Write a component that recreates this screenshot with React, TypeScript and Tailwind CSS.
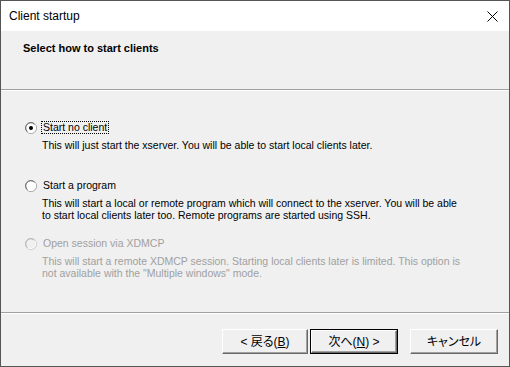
import React from 'react';

const ui = "font-['Liberation_Sans',Arial,sans-serif]";
const jp = "font-['Liberation_Sans','Noto_Sans_CJK_JP',sans-serif] [font-feature-settings:'palt']";

function Radio({ checked = false, disabled = false }: { checked?: boolean; disabled?: boolean }) {
  const fill = disabled ? '#f0f0f0' : '#ffffff';
  return (
    <svg width="12" height="12" viewBox="0 0 12 12" className="shrink-0">
      <circle cx="6" cy="6" r="5.5" fill={fill} stroke={disabled ? '#c8c8c8' : '#9a9a9a'} />
      <path d="M2.2 9.4 A5 5 0 0 1 9.4 2.2" fill="none" stroke={disabled ? '#b4b4b4' : '#6a6a6a'} strokeWidth="1" />
      <path d="M9.9 3 A5 5 0 0 1 3 9.9" fill="none" stroke="#ffffff" strokeWidth="1" />
      {checked && <circle cx="6" cy="6" r="2" fill="#000" />}
    </svg>
  );
}

const options = [
  {
    label: 'Start no client',
    lines: ['This will just start the xserver. You will be able to start local clients later.'],
    checked: true,
    focus: true,
  },
  {
    label: 'Start a program',
    lines: [
      'This will start a local or remote program which will connect to the xserver. You will be able',
      'to start local clients later too. Remote programs are started using SSH.',
    ],
  },
  {
    label: 'Open session via XDMCP',
    lines: [
      'This will start a remote XDMCP session. Starting local clients later is limited. This option is',
      'not available with the "Multiple windows" mode.',
    ],
    disabled: true,
  },
];

function Button({ children, primary = false, width }: { children: React.ReactNode; primary?: boolean; width: string }) {
  return (
    <div className={`${width} h-[25px] ${primary ? 'border border-black' : ''}`}>
      <div className="h-full w-full flex items-center justify-center bg-[#f0f0f0] border-t border-l border-t-white border-l-white border-b border-r border-b-[#696969] border-r-[#696969] shadow-[inset_-1px_-1px_0_#a0a0a0]">
        <span className={`${jp} text-[12px] text-black leading-none`}>{children}</span>
      </div>
    </div>
  );
}

export default function App() {
  return (
    <div className="w-[510px] h-[367px] flex flex-col border border-[#555555] bg-[#f0f0f0] overflow-hidden">
      <div className="h-[30px] shrink-0 bg-white flex items-center justify-between pl-[8px] pr-[11px]">
        <span className={`${ui} text-[12px] text-black`}>Client startup</span>
        <svg width="11" height="11" viewBox="0 0 11 11">
          <path d="M0.5 0.5 L10.5 10.5 M10.5 0.5 L0.5 10.5" stroke="#000" strokeWidth="1" />
        </svg>
      </div>

      <div className="h-[58px] shrink-0 pl-[22px] pt-[11px]">
        <div className={`${ui} text-[11px] leading-[13px] font-bold text-black`}>Select how to start clients</div>
      </div>
      <div className="h-px bg-[#a0a0a0] shrink-0" />
      <div className="h-px bg-white shrink-0" />

      <div className="h-[221px] shrink-0 pl-[24px] pt-[30px]">
        {options.map((o) => (
          <div key={o.label} className="h-[58px]">
            <div className="flex items-center h-[13px] gap-[5px]">
              <Radio checked={o.checked} disabled={o.disabled} />
              <span
                className={`${ui} text-[10.5px] leading-[11px] px-[1px] ${o.focus ? 'outline outline-1 outline-dotted outline-black' : ''} ${
                  o.disabled ? 'text-[#a0a0a0]' : 'text-black'
                }`}
              >
                {o.label}
              </span>
            </div>
            <div className={`${ui} text-[10.5px] leading-[12px] mt-[5px] pl-[17px] ${o.disabled ? 'text-[#a0a0a0]' : 'text-black'}`}>
              {o.lines.map((l) => (
                <div key={l} className="whitespace-nowrap">
                  {l}
                </div>
              ))}
            </div>
          </div>
        ))}
      </div>

      <div className="h-px bg-[#a0a0a0] shrink-0" />
      <div className="h-px bg-white shrink-0" />

      <div className="flex-1 flex justify-end items-start pt-[15px] pr-[11px]">
        <Button width="w-[86px]">
          &lt; 戻る(<span className="underline">B</span>)
        </Button>
        <div className="ml-[2px]">
          <Button primary width="w-[88px]">
            次へ(<span className="underline">N</span>) &gt;
          </Button>
        </div>
        <div className="ml-[12px]">
          <Button width="w-[88px]">キャンセル</Button>
        </div>
      </div>
    </div>
  );
}
